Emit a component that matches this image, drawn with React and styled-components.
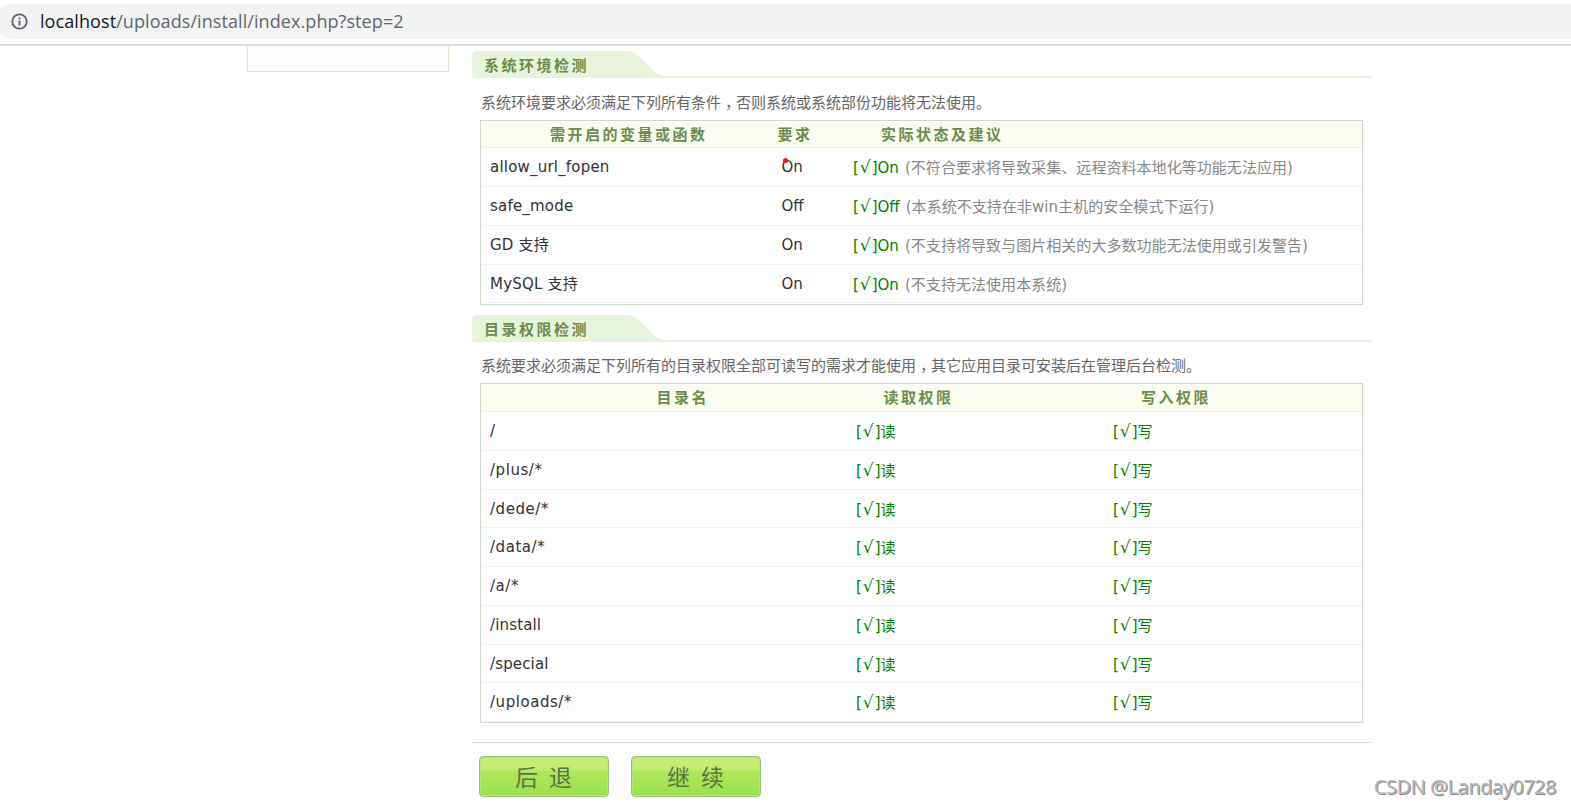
import styled, { createGlobalStyle } from "styled-components";

const GlobalStyle = createGlobalStyle`
  * {
    box-sizing: border-box;
  }
  body {
    margin: 0;
    background-color: #fff;
    font-family: "DejaVu Sans", "Noto Sans CJK SC", sans-serif;
    font-size: 15px;
    color: #333;
    overflow: hidden;
  }
`;

const Screen = styled.div`
  position: relative;
  height: 808px;
  overflow: hidden;
`;

const Toolbar = styled.header`
  height: 46px;
  padding-top: 4px;
  border-bottom: 2px solid #dadcde;
`;

const AddressBar = styled.div`
  display: flex;
  align-items: center;
  gap: 12px;
  height: 35px;
  margin-left: -5px;
  padding-left: 16px;
  background-color: #f1f3f4;
  border-radius: 18px 0 0 18px;
`;

const Url = styled.span`
  padding-bottom: 2px;
  font-family: "Open Sans", sans-serif;
  font-size: 18px;
  line-height: 24px;
  letter-spacing: 0.08px;
  color: #63676b;
  white-space: nowrap;
`;

const Host = styled.span`
  color: #17181a;
`;

const Body = styled.div`
  display: flex;
  align-items: flex-start;
  gap: 23px;
  padding-left: 247px;
`;

const Sidebar = styled.aside`
  width: 202px;
  height: 26px;
  background-color: #fbfdfa;
  border: 1px solid #dfecd1;
  border-top: none;
`;

const Main = styled.main`
  width: 900px;
  padding-top: 5px;
`;

const TitleBar = styled.div`
  display: flex;
  position: relative;
  height: 27px;
`;

const TabShape = styled.svg`
  position: absolute;
  left: 0;
  top: 0;
`;

const Title = styled.h2`
  position: relative;
  margin: 0;
  padding-left: 12px;
  font-size: 15px;
  line-height: 30px;
  letter-spacing: 2.5px;
  color: #6c8b4e;
`;

const Intro = styled.p`
  height: 41.7px;
  margin: 0;
  padding: 12.5px 0 0 9px;
  line-height: 22px;
  color: #666;
  white-space: nowrap;
`;

/* half-width comma, centred in a full-width cell */
const Comma = styled.span`
  padding: 0 3.5px 0 4px;
  font-family: "Noto Sans CJK SC", sans-serif;
  font-feature-settings: "halt";
`;

const Table = styled.div`
  width: 883px;
  margin-left: 8px;
  padding: 1px 1px 0.3px;
  border: 1px solid #cbdac6;
`;

const HeadRow = styled.div`
  display: grid;
  grid-template-columns: ${({ $columns }) => $columns};
  height: 26.7px;
  background-color: #fafdef;
  border-bottom: 1px solid #eef4d9;
`;

const HeadCell = styled.div`
  font-weight: bold;
  line-height: 27px;
  letter-spacing: 2.5px;
  color: #6c8b4e;
  white-space: nowrap;
`;

const Row = styled.div`
  display: grid;
  grid-template-columns: ${({ $columns }) => $columns};
  height: 38.75px;
  border-bottom: 1px solid #f1f1f1;
`;

const Cell = styled.div`
  position: relative;
  line-height: 39px;
  letter-spacing: ${({ $spacing }) => $spacing || 0}px;
  white-space: nowrap;
`;

const Passed = styled.span`
  color: #008000;
`;

const Tick = styled.span`
  margin: 0 1px;
  font-size: 17px;
`;

const Note = styled.small`
  margin-left: 6px;
  font-size: 15px;
  letter-spacing: 0.05px;
  color: #888;
`;

const RedDot = styled.i`
  position: absolute;
  left: 1px;
  top: 10px;
  width: 5px;
  height: 5px;
  background-color: #e51c1c;
  border-radius: 50%;
`;

const Footer = styled.footer`
  display: flex;
  gap: 22px;
  margin-top: 18.6px;
  padding: 13px 7px;
  border-top: 1px solid #ddd;
`;

const Button = styled.button`
  width: 130px;
  height: 41px;
  padding: 0 1px 0 0;
  border: 1px solid #9fc37b;
  border-radius: 4px;
  background: linear-gradient(#c4ef78 0, #bfec70 33%, #b0e75c 36%, #9be04e 100%);
  box-shadow: inset 0 0 0 1px #b9e484;
  font-family: "Noto Sans CJK SC", sans-serif;
  font-size: 23px;
  line-height: 37px;
  word-spacing: 6px;
  color: #5d7343;
`;

const Watermark = styled.div`
  position: absolute;
  right: 15px;
  bottom: 7px;
  font-family: "Noto Sans", sans-serif;
  font-size: 20px;
  line-height: 28px;
  letter-spacing: -0.5px;
  color: #b8b8b8;
  text-shadow: 1px 1px 0 #8a8a8a;
  white-space: nowrap;
`;

const ENV_COLUMNS = "291.5px 71.5px 1fr";
const ENV_HEAD_COLUMNS = "227.5px 103.5px 1fr";
const DIR_COLUMNS = "366px 257px 1fr";
const DIR_HEAD_COLUMNS = "227px 257.5px 1fr";

const envRows = [
  { name: "allow_url_fopen", need: "On", note: "(不符合要求将导致采集、远程资料本地化等功能无法应用)", marked: true },
  { name: "safe_mode", need: "Off", note: "(本系统不支持在非win主机的安全模式下运行)" },
  { name: "GD 支持", need: "On", note: "(不支持将导致与图片相关的大多数功能无法使用或引发警告)" },
  { name: "MySQL 支持", need: "On", note: "(不支持无法使用本系统)" },
];

const directories = ["/", "/plus/*", "/dede/*", "/data/*", "/a/*", "/install", "/special", "/uploads/*"];

function InfoIcon() {
  return (
    <svg width="17" height="17" viewBox="0 0 17 17" fill="none">
      <circle cx="8.5" cy="8.5" r="7.2" stroke="#5f6368" strokeWidth="1.8" />
      <path d="M8.5 7.5v5M8.5 4.5v1.8" stroke="#5f6368" strokeWidth="1.9" />
    </svg>
  );
}

function SectionTitle({ children }) {
  return (
    <TitleBar>
      <TabShape width="900" height="27" viewBox="0 0 900 27">
        <path
          d="M5 0H153C160 0 165 3 171 9C178 16 183 24 191 25H900V27H4Q0 27 0 23V5Q0 0 5 0Z"
          fill="#e8f3dc"
        />
      </TabShape>
      <Title>{children}</Title>
    </TitleBar>
  );
}

function Status({ children }) {
  return (
    <Passed>
      [<Tick>√</Tick>]{children}
    </Passed>
  );
}

function EnvTable() {
  return (
    <Table>
      <HeadRow $columns={`68px ${ENV_HEAD_COLUMNS}`}>
        <i />
        <HeadCell>需开启的变量或函数</HeadCell>
        <HeadCell>要求</HeadCell>
        <HeadCell>实际状态及建议</HeadCell>
      </HeadRow>
      {envRows.map(({ name, need, note, marked }) => (
        <Row key={name} $columns={`8px ${ENV_COLUMNS}`}>
          <i />
          <Cell $spacing={0.2}>{name}</Cell>
          <Cell>
            {need}
            {marked && <RedDot />}
          </Cell>
          <Cell>
            <Status>{need}</Status>
            <Note>{note}</Note>
          </Cell>
        </Row>
      ))}
    </Table>
  );
}

function DirTable() {
  return (
    <Table>
      <HeadRow $columns={`174.5px ${DIR_HEAD_COLUMNS}`}>
        <i />
        <HeadCell>目录名</HeadCell>
        <HeadCell>读取权限</HeadCell>
        <HeadCell>写入权限</HeadCell>
      </HeadRow>
      {directories.map((dir) => (
        <Row key={dir} $columns={`8px ${DIR_COLUMNS}`}>
          <i />
          <Cell $spacing={dir.endsWith("*") ? 0.55 : 0.15}>{dir}</Cell>
          <Cell>
            <Status>读</Status>
          </Cell>
          <Cell>
            <Status>写</Status>
          </Cell>
        </Row>
      ))}
    </Table>
  );
}

const DirSection = styled.section`
  margin-top: 10px;
`;

function App() {
  return (
    <Screen>
      <GlobalStyle />
      <Toolbar>
        <AddressBar>
          <InfoIcon />
          <Url>
            <Host>localhost</Host>/uploads/install/index.php?step=2
          </Url>
        </AddressBar>
      </Toolbar>
      <Body>
        <Sidebar />
        <Main>
          <section>
            <SectionTitle>系统环境检测</SectionTitle>
            <Intro>
              系统环境要求必须满足下列所有条件<Comma>，</Comma>否则系统或系统部份功能将无法使用。
            </Intro>
            <EnvTable />
          </section>
          <DirSection>
            <SectionTitle>目录权限检测</SectionTitle>
            <Intro>
              系统要求必须满足下列所有的目录权限全部可读写的需求才能使用<Comma>，</Comma>其它应用目录可安装后在管理后台检测。
            </Intro>
            <DirTable />
          </DirSection>
          <Footer>
            <Button type="button">后 退</Button>
            <Button type="button">继 续</Button>
          </Footer>
        </Main>
      </Body>
      <Watermark>CSDN @Landay0728</Watermark>
    </Screen>
  );
}

export default App;
